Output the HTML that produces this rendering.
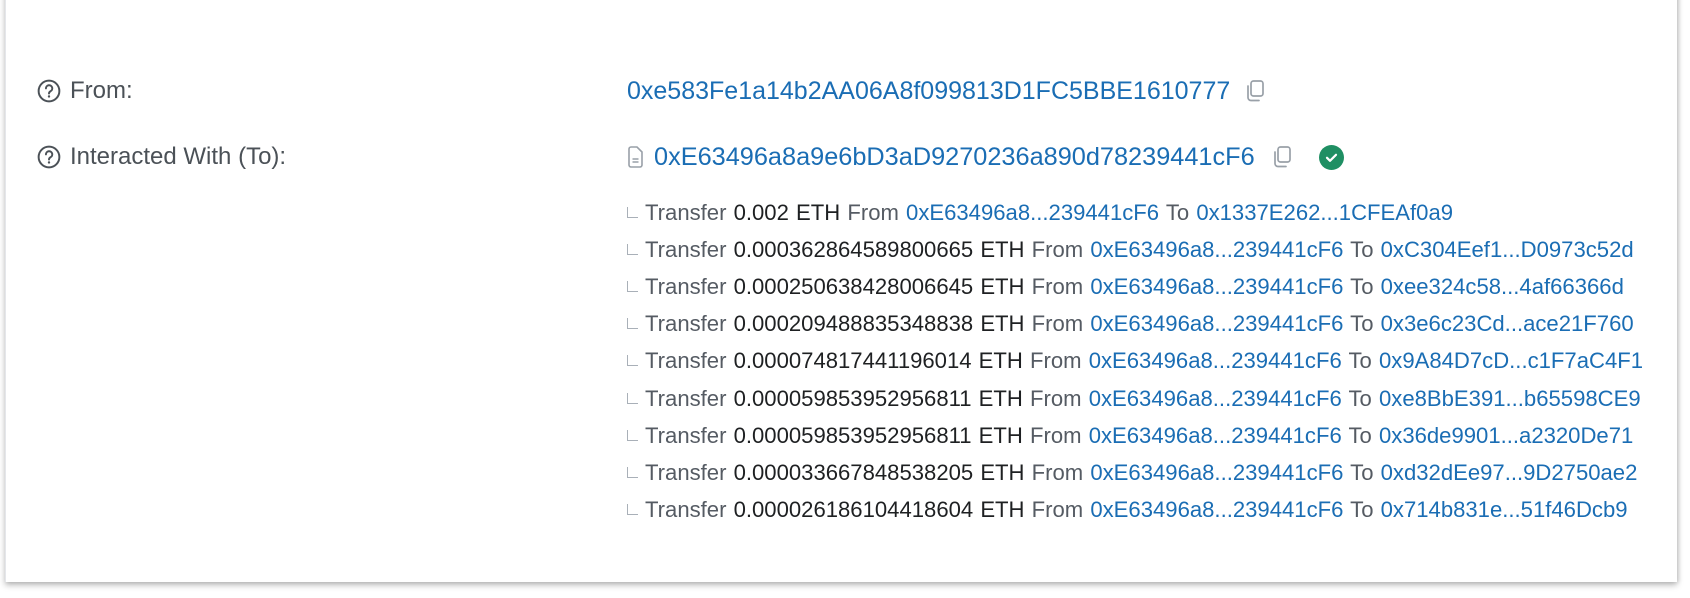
<!DOCTYPE html>
<html><head><meta charset="utf-8"><style>
body{margin:0;width:1690px;height:598px;background:#fff;font-family:"Liberation Sans",Arial,sans-serif;overflow:hidden;position:relative}
.card{position:absolute;left:5px;top:-10px;width:1671px;height:592px;background:#fff;border-left:1px solid #e4e6ea;box-shadow:0 3px 6px rgba(0,0,0,.28),2px 0 4px rgba(0,0,0,.1)}
.lbl{position:absolute;left:37px;font-size:24px;color:#4b5157;height:30px;line-height:30px;display:flex;align-items:center}
.lbl svg{margin-right:9px}
.val{position:absolute;left:627px;font-size:25px;color:#1a6db4;height:30px;line-height:30px;display:flex;align-items:center;white-space:nowrap}
.row{position:absolute;left:625px;font-size:22.1px;height:30px;line-height:30px;color:#555b63;white-space:pre;word-spacing:1px}
.row .c{display:inline-block;width:10px;height:10px;border-left:1.5px solid #a9b0b8;border-bottom:1.5px solid #a9b0b8;margin:0 7px 3px 2px;vertical-align:middle}
.row b{font-weight:normal;color:#1e2022}
.row a{color:#1a6db4;text-decoration:none}
</style></head><body>
<div class="card"></div>
<div class="lbl" style="top:76px"><svg width="24" height="24" viewBox="0 0 22 22"><circle cx="11" cy="11" r="9.5" fill="none" stroke="#4b5157" stroke-width="1.8"/><path d="M8.2 8.6a2.9 2.9 0 1 1 4.2 2.6c-.9.5-1.4 1-1.4 2.1" fill="none" stroke="#4b5157" stroke-width="1.8" stroke-linecap="round"/><circle cx="11" cy="16" r="1.1" fill="#4b5157"/></svg>From:</div>
<div class="lbl" style="top:142px"><svg width="24" height="24" viewBox="0 0 22 22"><circle cx="11" cy="11" r="9.5" fill="none" stroke="#4b5157" stroke-width="1.8"/><path d="M8.2 8.6a2.9 2.9 0 1 1 4.2 2.6c-.9.5-1.4 1-1.4 2.1" fill="none" stroke="#4b5157" stroke-width="1.8" stroke-linecap="round"/><circle cx="11" cy="16" r="1.1" fill="#4b5157"/></svg>Interacted With (To):</div>
<div class="val" style="top:76px">0xe583Fe1a14b2AA06A8f099813D1FC5BBE1610777<svg style="margin-left:14px" width="22" height="24" viewBox="0 0 22 24"><rect x="7" y="2" width="12" height="15" rx="2.5" fill="none" stroke="#99a0a8" stroke-width="1.7"/><path d="M4 7v11.5A3 3 0 0 0 7 21.5h8" fill="none" stroke="#99a0a8" stroke-width="1.7" stroke-linecap="round"/></svg></div>
<div class="val" style="top:142px"><svg style="margin-right:10px" width="17" height="22" viewBox="0 0 17 22"><path d="M2 3a2 2 0 0 1 2-2h6l5 5v13a2 2 0 0 1-2 2H4a2 2 0 0 1-2-2z" fill="none" stroke="#99a0a8" stroke-width="1.6"/><path d="M5.5 13h6M5.5 16h6" stroke="#99a0a8" stroke-width="1.5"/></svg><span style="font-size:25.3px">0xE63496a8a9e6bD3aD9270236a890d78239441cF6</span><svg style="margin-left:16px" width="22" height="24" viewBox="0 0 22 24"><rect x="7" y="2" width="12" height="15" rx="2.5" fill="none" stroke="#99a0a8" stroke-width="1.7"/><path d="M4 7v11.5A3 3 0 0 0 7 21.5h8" fill="none" stroke="#99a0a8" stroke-width="1.7" stroke-linecap="round"/></svg><svg style="margin-left:26px" width="25" height="25" viewBox="0 0 25 25"><circle cx="12.5" cy="12.5" r="12.5" fill="#1f8f63"/><path d="M8 12.8l3 3 6-6" fill="none" stroke="#fff" stroke-width="2.2" stroke-linecap="round" stroke-linejoin="round"/></svg></div>

<div class="row" style="top:198px"><span class="c"></span>Transfer <b>0.002 ETH</b> From <a>0xE63496a8...239441cF6</a> To <a>0x1337E262...1CFEAf0a9</a></div>
<div class="row" style="top:235px"><span class="c"></span>Transfer <b>0.000362864589800665 ETH</b> From <a>0xE63496a8...239441cF6</a> To <a>0xC304Eef1...D0973c52d</a></div>
<div class="row" style="top:272px"><span class="c"></span>Transfer <b>0.000250638428006645 ETH</b> From <a>0xE63496a8...239441cF6</a> To <a>0xee324c58...4af66366d</a></div>
<div class="row" style="top:309px"><span class="c"></span>Transfer <b>0.000209488835348838 ETH</b> From <a>0xE63496a8...239441cF6</a> To <a>0x3e6c23Cd...ace21F760</a></div>
<div class="row" style="top:346px"><span class="c"></span>Transfer <b>0.000074817441196014 ETH</b> From <a>0xE63496a8...239441cF6</a> To <a>0x9A84D7cD...c1F7aC4F1</a></div>
<div class="row" style="top:384px"><span class="c"></span>Transfer <b>0.000059853952956811 ETH</b> From <a>0xE63496a8...239441cF6</a> To <a>0xe8BbE391...b65598CE9</a></div>
<div class="row" style="top:421px"><span class="c"></span>Transfer <b>0.000059853952956811 ETH</b> From <a>0xE63496a8...239441cF6</a> To <a>0x36de9901...a2320De71</a></div>
<div class="row" style="top:458px"><span class="c"></span>Transfer <b>0.000033667848538205 ETH</b> From <a>0xE63496a8...239441cF6</a> To <a>0xd32dEe97...9D2750ae2</a></div>
<div class="row" style="top:495px"><span class="c"></span>Transfer <b>0.000026186104418604 ETH</b> From <a>0xE63496a8...239441cF6</a> To <a>0x714b831e...51f46Dcb9</a></div>
</body></html>
